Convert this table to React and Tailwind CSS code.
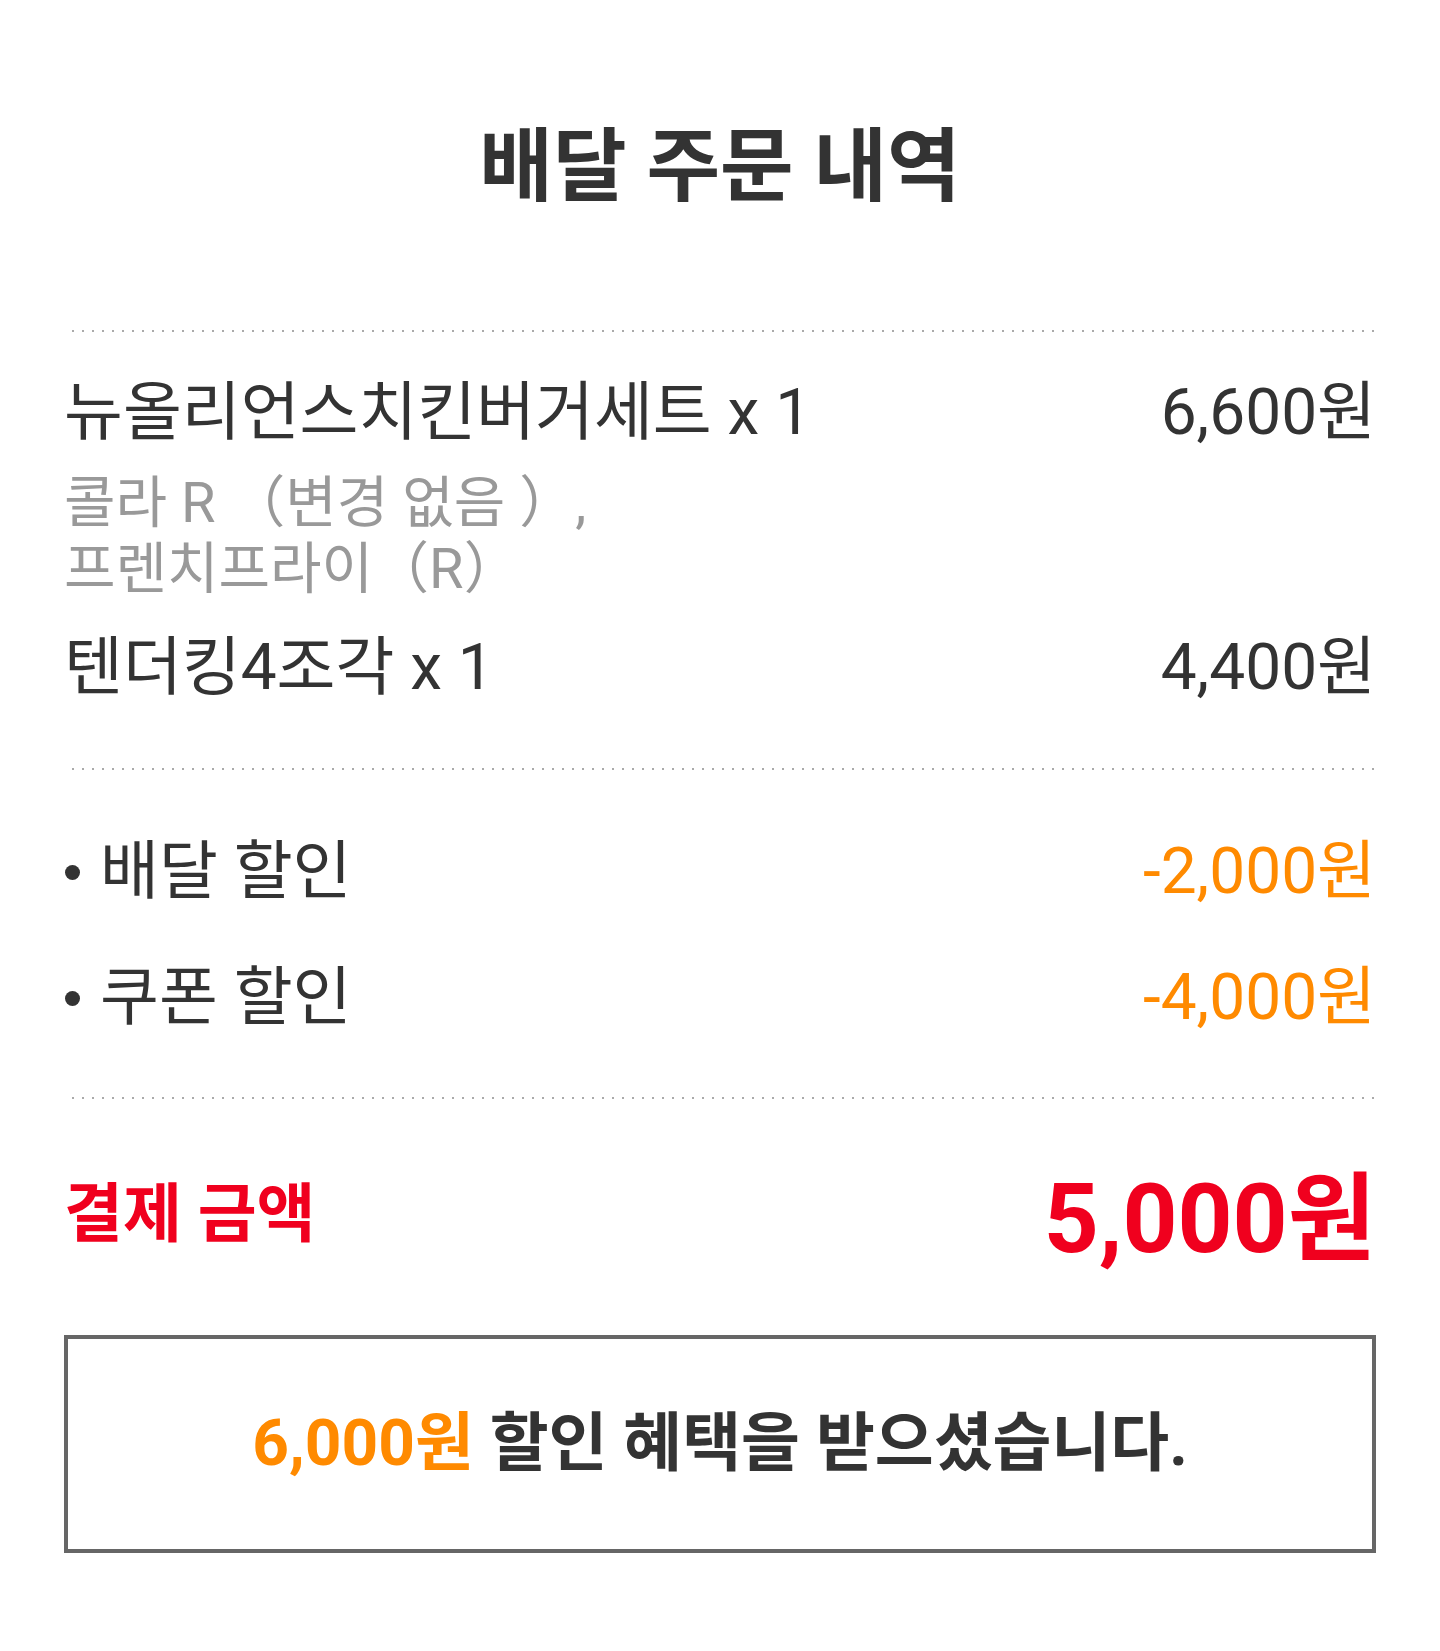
import React from 'react';

const items = [
  { name: '뉴올리언스치킨버거세트 x 1', price: '6,600원', options: ['콜라 R （변경 없음 ）,', '프렌치프라이（R）'] },
  { name: '텐더킹4조각 x 1', price: '4,400원', options: [] },
];

const discounts = [
  { label: '배달 할인', amount: '-2,000원' },
  { label: '쿠폰 할인', amount: '-4,000원' },
];

const Dots = () => (
  <div className="h-[2px] w-full bg-[linear-gradient(to_right,transparent_8px,#aaaaaa_8px)] bg-[length:10px_2px] bg-repeat-x" />
);

const App = () => {
  return (
    <div
      className="min-h-screen bg-white px-16 text-[#333333]"
      style={{ fontFamily: "Roboto, 'Noto Sans CJK KR', sans-serif" }}
    >
      {/* title */}
      <h1 className="pt-[119px] pb-[115px] text-center text-[80px] font-bold leading-[96px]">배달 주문 내역</h1>

      <Dots />

      {/* order items */}
      <div className="pt-[43px] pb-[62px]">
        {items.map((item, i) => (
          <div key={i} className={i > 0 ? 'mt-[28px]' : ''}>
            <div className="flex justify-between text-[64px] leading-[76px]">
              <span>{item.name}</span>
              <span>{item.price}</span>
            </div>
            {item.options.length > 0 && (
              <div className="mt-[19px] text-[56px] leading-[66px] text-[#999999]">
                {item.options.map((o, j) => (
                  <div key={j}>{o}</div>
                ))}
              </div>
            )}
          </div>
        ))}
      </div>

      <Dots />

      {/* discounts */}
      <div className="flex flex-col gap-[50px] pt-[64px] pb-[61px]">
        {discounts.map((d) => (
          <div key={d.label} className="flex justify-between text-[64px] leading-[76px]">
            <span className="flex items-center">
              <span className="ml-[1px] mr-[20px] inline-block h-[15px] w-[15px] rounded-full bg-[#333333]" />
              {d.label}
            </span>
            <span className="text-[#ff8a00]">{d.amount}</span>
          </div>
        ))}
      </div>

      <Dots />

      {/* total */}
      <div className="flex items-center justify-between pt-[58px] pb-[63px] font-bold text-[#f0001e]">
        <span className="text-[64px] leading-[76px]">결제 금액</span>
        <span className="pt-[10px] text-[96px] leading-[105px]">5,000원</span>
      </div>

      {/* benefit box */}
      <div className="flex h-[218px] items-center justify-center border-4 border-[#666666] text-[64px] font-bold leading-[76px]">
        <span>
          <span className="text-[#ff8a00]">6,000원</span> 할인 혜택을 받으셨습니다.
        </span>
      </div>
      <div className="h-[97px]" />
    </div>
  );
};

export default App;
